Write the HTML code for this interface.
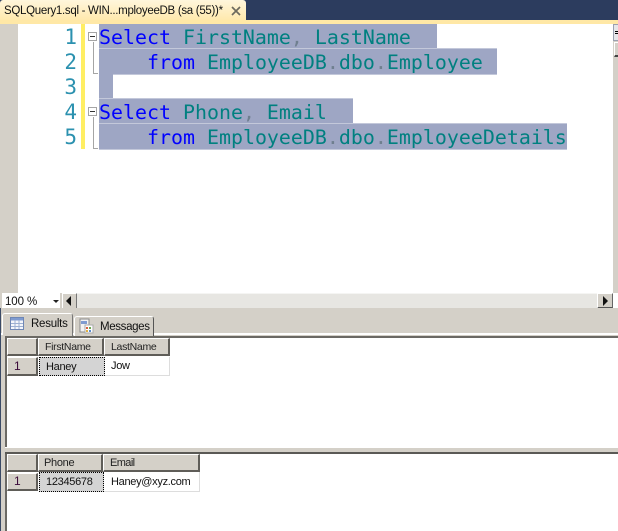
<!DOCTYPE html>
<html><head><meta charset="utf-8"><style>
html,body{margin:0;padding:0;background:#fff}
#p{position:relative;width:618px;height:531px;overflow:hidden;background:#fff;font-family:"Liberation Sans",sans-serif;font-size:12px;color:#000}
#p div{position:absolute;box-sizing:border-box;white-space:pre}
.ln{left:40px;width:37px;text-align:right;font:21px/27px "DejaVu Sans Mono",monospace;color:#2b91af;height:25px}
.c{left:99px;font:19.93px/27px "DejaVu Sans Mono",monospace;color:#008080;height:25px}
.c b{font-weight:normal;color:#0000ff}.c i{font-style:normal;color:#6f7f8f}
.s{background:#9ea6c4;border-top:1px solid #c3c8da;border-bottom:1px solid #c3c8da}
.h{background:#d4d0c8;border-top:1px solid #fff;border-left:1px solid #fff;border-right:2px solid #5f5d58;border-bottom:2px solid #5f5d58;line-height:17px;color:#222;letter-spacing:-.3px}
.t{line-height:18px;font-size:11px;letter-spacing:-.3px;color:#111}
</style></head><body><div id="p">
<div style="left:0;top:0;width:618px;height:20px;background:#2c3c5e"></div>
<div style="left:0;top:0;width:246px;height:20px;background:linear-gradient(#fff6dc,#ffe9ad);border-radius:3px 3px 0 0"></div>
<div style="left:4px;top:2px;font-size:11.5px;line-height:19px;letter-spacing:-.3px;color:#111">SQLQuery1.sql - WIN...mployeeDB (sa (55))*</div>
<svg style="position:absolute;left:230px;top:5px" width="12" height="12"><path d="M2 2L10 10M10 2L2 10" stroke="#6d6a5e" stroke-width="1.7"/></svg>
<div style="left:0;top:20px;width:618px;height:4px;background:#ffe8a6"></div>
<div style="left:0;top:24px;width:18px;height:269px;background:#d4d0c8"></div>
<div style="left:81px;top:24px;width:4px;height:125px;background:#ffee62"></div>

<div class="s" style="left:99px;top:24px;width:338px;height:25px;border-top:0"></div>
<div class="s" style="left:99px;top:48px;width:398px;height:27px"></div>
<div class="s" style="left:99px;top:74px;width:14px;height:25px;border:0"></div>
<div class="s" style="left:99px;top:98px;width:254px;height:26px"></div>
<div class="s" style="left:99px;top:123px;width:468px;height:27px"></div>

<div class="ln" style="top:24px">1</div><div class="ln" style="top:49px">2</div><div class="ln" style="top:74px">3</div><div class="ln" style="top:99px">4</div><div class="ln" style="top:124px">5</div>

<div style="left:93px;top:42px;width:1px;height:31px;background:#a5a5a5"></div>
<div style="left:93px;top:73px;width:5px;height:1px;background:#a5a5a5"></div>
<div style="left:93px;top:117px;width:1px;height:31px;background:#a5a5a5"></div>
<div style="left:93px;top:148px;width:5px;height:1px;background:#a5a5a5"></div>
<div style="left:88px;top:32px;width:9px;height:9px;border:1px solid #a5a5a5;background:#fff"></div>
<div style="left:90px;top:36px;width:5px;height:1px;background:#333"></div>
<div style="left:88px;top:107px;width:9px;height:9px;border:1px solid #a5a5a5;background:#fff"></div>
<div style="left:90px;top:111px;width:5px;height:1px;background:#333"></div>

<div class="c" style="top:24px"><b>Select</b> FirstName<i>,</i> LastName</div>
<div class="c" style="top:49px">    <b>from</b> EmployeeDB<i>.</i>dbo<i>.</i>Employee</div>
<div class="c" style="top:99px"><b>Select</b> Phone<i>,</i> Email</div>
<div class="c" style="top:124px">    <b>from</b> EmployeeDB<i>.</i>dbo<i>.</i>EmployeeDetails</div>

<div style="left:613px;top:24px;width:5px;height:269px;background:#d4d0c8"></div>
<div style="left:613px;top:24px;width:5px;height:17px;background:#e6e6ea;border:1px solid #9aa0b0;border-right:0"></div>
<div style="left:615px;top:31px;width:3px;height:1px;background:#000"></div>
<div style="left:615px;top:33px;width:3px;height:1px;background:#000"></div>
<div style="left:614px;top:42px;width:4px;height:15px;background:#d4d0c8;border-top:1px solid #fff;border-left:1px solid #fff;border-bottom:2px solid #444"></div>

<div style="left:0;top:293px;width:618px;height:15px;background:#d4d0c8"></div>
<div style="left:2px;top:293px;width:58px;height:15px;background:#fff"></div>
<div style="left:5px;top:294px;font-size:11.5px;line-height:16px;letter-spacing:-.1px;color:#111">100 %</div>
<svg style="position:absolute;left:53px;top:300px" width="6" height="3"><path d="M0 0H6L3 3Z" fill="#222"/></svg>
<div style="left:62px;top:293px;width:15px;height:16px;background:#d4d0c8;border-top:1px solid #fff;border-left:1px solid #fff;border-right:1px solid #777;border-bottom:1px solid #555"></div>
<svg style="position:absolute;left:66px;top:296px" width="6" height="10"><path d="M5 0V10L0 5Z" fill="#111"/></svg>
<div style="left:77px;top:293px;width:520px;height:15px;background:#e7e6e2;border-top:1px solid #f5f5f3"></div>
<div style="left:597px;top:293px;width:16px;height:16px;background:#d4d0c8;border-top:1px solid #fff;border-left:1px solid #fff;border-right:1px solid #666;border-bottom:2px solid #555"></div>
<svg style="position:absolute;left:603px;top:296px" width="6" height="10"><path d="M0 0V10L5 5Z" fill="#111"/></svg>
<div style="left:613px;top:293px;width:5px;height:15px;background:#fff"></div>

<div style="left:0;top:308px;width:618px;height:28px;background:#d4d0c8"></div>
<div style="left:0;top:333px;width:618px;height:2px;background:#fff"></div>
<div style="left:2px;top:313px;width:71px;height:24px;background:#d4d0c8;border-top:1px solid #fff;border-left:1px solid #fff;border-right:1px solid #777;border-radius:3px 3px 0 0"></div>
<svg style="position:absolute;left:10px;top:317px" width="14" height="13"><rect x=".5" y=".5" width="13" height="12" fill="#f4f6fb" stroke="#6f87b5"/><rect x="1" y="1" width="12" height="2.5" fill="#7f9bd0"/><path d="M1 6.5H13M1 9.5H13M5 3V12M9 3V12" stroke="#9db0d3"/></svg>
<div style="left:31px;top:316px;font-size:11.5px;line-height:16px;letter-spacing:-.25px;color:#111">Results</div>
<div style="left:74px;top:316px;width:80px;height:20px;background:#d4d0c8;border-top:1px solid #fff;border-left:1px solid #fff;border-right:1px solid #555;border-radius:3px 3px 0 0"></div>
<svg style="position:absolute;left:79px;top:318px" width="15" height="16"><rect x="1" y="1" width="9" height="13" fill="#f2f2f2" stroke="#8a8a8a"/><rect x="2" y="3" width="6" height="3" fill="#7f9bd0"/><rect x="6" y="7" width="8" height="8" fill="#fff" stroke="#aaa"/><rect x="7" y="9" width="2" height="2" fill="#d95f3a"/><rect x="10" y="9" width="2" height="2" fill="#6aa84f"/><rect x="7" y="12" width="2" height="2" fill="#e0b040"/><rect x="10" y="12" width="2" height="2" fill="#5b8bd0"/></svg>
<div style="left:100px;top:319px;font-size:11.5px;line-height:16px;letter-spacing:-.35px;color:#111">Messages</div>

<div style="left:0;top:335px;width:6px;height:196px;background:#d4d0c8"></div>
<div style="left:0;top:308px;width:1px;height:223px;background:#3a4a66"></div>
<div style="left:5px;top:336px;width:613px;height:2px;background:#6b6964"></div>
<div style="left:5px;top:336px;width:2px;height:195px;background:#6b6964"></div>

<div class="h" style="left:7px;top:338px;width:31px;height:18px"></div>
<div class="h" style="left:38px;top:338px;width:66px;height:18px;padding-left:6px;font-size:10.5px">FirstName</div>
<div class="h" style="left:104px;top:338px;width:66px;height:18px;padding-left:6px;font-size:10.5px">LastName</div>
<div class="h" style="left:7px;top:357px;width:31px;height:19px;padding-left:6px;color:#3a0a3a;line-height:16px">1</div>
<div class="t" style="left:39px;top:357px;width:66px;height:19px;background:#d4d4d4;border:1px dotted #000;padding-left:6px">Haney</div>
<div class="t" style="left:105px;top:357px;width:65px;height:19px;border-right:1px solid #ddd;border-bottom:1px solid #ddd;padding-left:6px">Jow</div>

<div style="left:5px;top:447px;width:613px;height:6px;background:#d4d0c8;border-top:1px solid #fff"></div>
<div style="left:5px;top:452px;width:613px;height:2px;background:#5a5955"></div>

<div class="h" style="left:7px;top:454px;width:31px;height:18px"></div>
<div class="h" style="left:38px;top:454px;width:65px;height:18px;padding-left:5px;font-size:11px">Phone</div>
<div class="h" style="left:103px;top:454px;width:97px;height:18px;padding-left:6px;font-size:11px;letter-spacing:-.6px">Email</div>
<div class="h" style="left:7px;top:473px;width:31px;height:18px;padding-left:6px;color:#3a0a3a;line-height:15px">1</div>
<div class="t" style="left:39px;top:472px;width:65px;height:20px;background:#d4d4d4;border:1px dotted #000;padding-left:6px;line-height:19px">12345678</div>
<div class="t" style="left:104px;top:472px;width:96px;height:20px;border-right:1px solid #ddd;border-bottom:1px solid #ddd;padding-left:7px;line-height:20px">Haney@xyz.com</div>
</div></body></html>
